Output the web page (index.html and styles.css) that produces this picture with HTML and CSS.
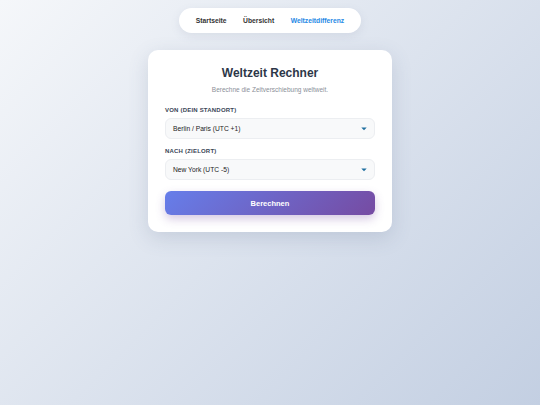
FILE: index.html
```html
<!DOCTYPE html>
<html lang="de">
<head>
<meta charset="utf-8">
<title>Weltzeit Rechner</title>
<link rel="stylesheet" href="styles.css">
</head>
<body>
<nav class="nav">
  <a class="nav-link" href="#">Startseite</a>
  <a class="nav-link" href="#">Übersicht</a>
  <a class="nav-link active" href="#">Weltzeitdifferenz</a>
</nav>
<main class="card">
  <h1 class="title">Weltzeit Rechner</h1>
  <p class="subtitle">Berechne die Zeitverschiebung weltweit.</p>
  <div class="field">
    <label class="label">VON (DEIN STANDORT)</label>
    <div class="select">
      <span class="select-text">Berlin / Paris (UTC +1)</span>
      <svg class="caret" width="6" height="4" viewBox="0 0 6 4"><path d="M0.3 0.5 L5.7 0.5 L3 3.3 Z" fill="#1f6f9f"/></svg>
    </div>
  </div>
  <div class="field">
    <label class="label">NACH (ZIELORT)</label>
    <div class="select">
      <span class="select-text">New York (UTC -5)</span>
      <svg class="caret" width="6" height="4" viewBox="0 0 6 4"><path d="M0.3 0.5 L5.7 0.5 L3 3.3 Z" fill="#1f6f9f"/></svg>
    </div>
  </div>
  <button class="button">Berechnen</button>
</main>
</body>
</html>
```
FILE: styles.css
```css
* { box-sizing: border-box; }
html, body { margin: 0; padding: 0; }
body {
  min-height: 100vh;
  background: linear-gradient(135deg, #f5f7fa 0%, #c3cfe2 100%);
  font-family: "Liberation Sans", Arial, sans-serif;
  display: flex;
  flex-direction: column;
  align-items: center;
}
.nav {
  margin-top: 8px;
  height: 25px;
  padding: 0 16.5px;
  display: flex;
  align-items: center;
  gap: 16.5px;
  background: #fff;
  border-radius: 13px;
  box-shadow: 0 3px 10px rgba(100, 110, 140, 0.12);
}
.nav-link {
  font-size: 6.75px;
  font-weight: bold;
  color: #333;
  text-decoration: none;
}
.nav-link.active { color: #1e88e5; }
.card {
  margin-top: 17px;
  width: 244px;
  background: #fff;
  border-radius: 10px;
  padding: 16px 17px 17px;
  box-shadow: 0 6px 20px rgba(80, 95, 130, 0.18);
  display: flex;
  flex-direction: column;
}
.title {
  margin: 0;
  text-align: center;
  font-size: 12px;
  font-weight: bold;
  color: #2d3748;
  line-height: 14px;
}
.subtitle {
  margin: 6px 0 0;
  text-align: center;
  font-size: 6.5px;
  color: #8a8f98;
  line-height: 8px;
}
.field {
  display: flex;
  flex-direction: column;
  gap: 4px;
  margin-top: 13px;
}
.field + .field { margin-top: 9px; }
.label {
  font-size: 6px;
  font-weight: bold;
  letter-spacing: 0.2px;
  color: #3a4556;
  line-height: 7px;
}
.select {
  height: 21px;
  background: #f8f9fa;
  border: 1px solid #eceef1;
  border-radius: 6px;
  display: flex;
  align-items: center;
  justify-content: space-between;
  padding: 0 7px 0 7px;
}
.select-text {
  font-size: 6.7px;
  color: #222;
}
.caret { display: block; }
.button {
  margin-top: 11px;
  height: 24px;
  border: none;
  border-radius: 6px;
  background: linear-gradient(135deg, #667eea 0%, #764ba2 100%);
  color: #fff;
  font-family: "Liberation Sans", Arial, sans-serif;
  font-size: 7.5px;
  font-weight: bold;
  box-shadow: 0 4px 10px rgba(118, 75, 162, 0.3);
}
```
